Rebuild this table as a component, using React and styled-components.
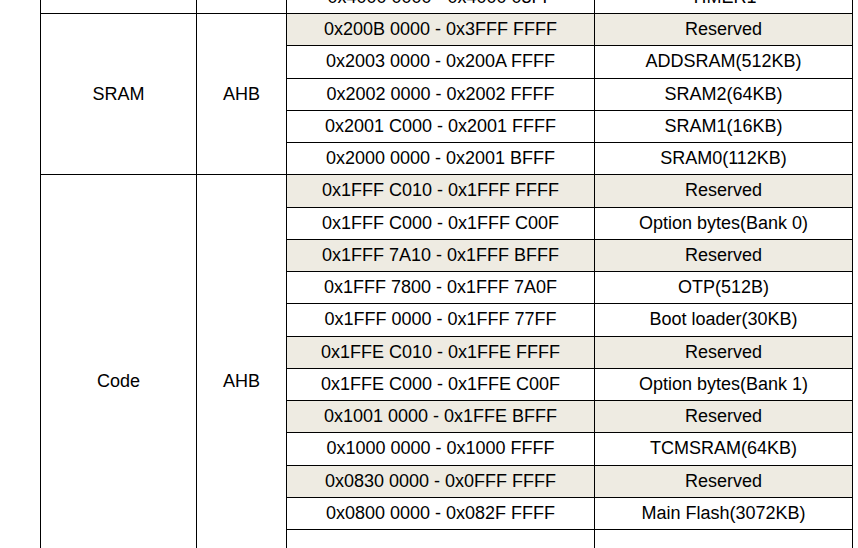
import React from 'react'
import styled, { createGlobalStyle } from 'styled-components'

const GlobalStyle = createGlobalStyle`
  html, body {
    margin: 0;
    padding: 0;
    background: #fff;
    overflow: hidden;
  }
`

const Page = styled.div`
  width: 858px;
  height: 548px;
  overflow: hidden;
  padding-left: 40px;
  box-sizing: border-box;
`

const MapTable = styled.table`
  margin-top: -19.25px;
  width: 812px;
  table-layout: fixed;
  border-collapse: collapse;
  font-family: "Liberation Sans", Arial, sans-serif;
  font-size: 18px;
  color: #000;
`

const Cell = styled.td`
  border: 1px solid #000;
  height: ${(p) => p.$h || 31.25}px;
  padding: 0;
  text-align: center;
  vertical-align: middle;
  white-space: nowrap;
  background: ${(p) => (p.$reserved ? '#eeebe2' : '#fff')};
`

const regions = [
  {
    name: 'SRAM',
    bus: 'AHB',
    rows: [
      ['0x200B 0000 - 0x3FFF FFFF', 'Reserved'],
      ['0x2003 0000 - 0x200A FFFF', 'ADDSRAM(512KB)'],
      ['0x2002 0000 - 0x2002 FFFF', 'SRAM2(64KB)'],
      ['0x2001 C000 - 0x2001 FFFF', 'SRAM1(16KB)'],
      ['0x2000 0000 - 0x2001 BFFF', 'SRAM0(112KB)'],
    ],
  },
  {
    name: 'Code',
    bus: 'AHB',
    rows: [
      ['0x1FFF C010 - 0x1FFF FFFF', 'Reserved'],
      ['0x1FFF C000 - 0x1FFF C00F', 'Option bytes(Bank 0)'],
      ['0x1FFF 7A10 - 0x1FFF BFFF', 'Reserved'],
      ['0x1FFF 7800 - 0x1FFF 7A0F', 'OTP(512B)'],
      ['0x1FFF 0000 - 0x1FFF 77FF', 'Boot loader(30KB)'],
      ['0x1FFE C010 - 0x1FFE FFFF', 'Reserved'],
      ['0x1FFE C000 - 0x1FFE C00F', 'Option bytes(Bank 1)'],
      ['0x1001 0000 - 0x1FFE BFFF', 'Reserved'],
      ['0x1000 0000 - 0x1000 FFFF', 'TCMSRAM(64KB)'],
      ['0x0830 0000 - 0x0FFF FFFF', 'Reserved'],
      ['0x0800 0000 - 0x082F FFFF', 'Main Flash(3072KB)'],
      ['', '', 57],
    ],
  },
]

const App = () => {
  return (
    <>
      <GlobalStyle />
      <Page>
        <MapTable>
          <colgroup>
            <col style={{ width: 156 }} />
            <col style={{ width: 90 }} />
            <col style={{ width: 308 }} />
            <col style={{ width: 258 }} />
          </colgroup>
          <tbody>
            <tr>
              <Cell />
              <Cell />
              <Cell>0x4000 0000 - 0x4000 03FF</Cell>
              <Cell>TIMER1</Cell>
            </tr>
            {regions.map((region) =>
              region.rows.map(([range, label, h], i) => {
                const reserved = label === 'Reserved'
                return (
                  <tr key={region.name + i}>
                    {i === 0 && (
                      <>
                        <Cell rowSpan={region.rows.length}>{region.name}</Cell>
                        <Cell rowSpan={region.rows.length}>{region.bus}</Cell>
                      </>
                    )}
                    <Cell $reserved={reserved} $h={h}>{range}</Cell>
                    <Cell $reserved={reserved} $h={h}>{label}</Cell>
                  </tr>
                )
              })
            )}
          </tbody>
        </MapTable>
      </Page>
    </>
  )
}

export default App
